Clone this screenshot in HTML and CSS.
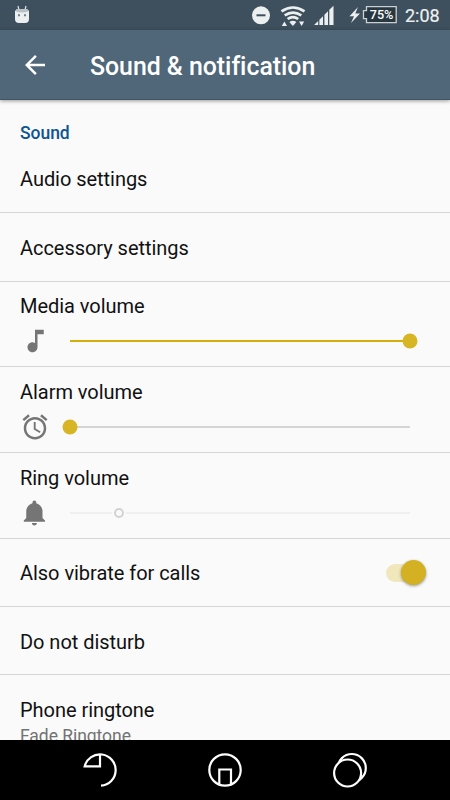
FILE: index.html
```html
<!DOCTYPE html>
<html lang="en">
<head>
    <meta charset="UTF-8">
    <meta name="viewport" content="width=device-width, initial-scale=1.0">
    <title>Sound &amp; notification</title>
    <link rel="stylesheet" href="styles.css">
</head>
<body>
    <div class="status-bar">
        <svg class="android" width="16" height="18" viewBox="0 0 16 18">
            <path d="M4 1l1 4M12 1l-1 4" stroke="#dfe3e5" stroke-width="1.2"/>
            <path d="M3 4h10l2 2v8q0 4-4 4H5q-4 0-4-4V6z" fill="#eceff0"/>
            <path d="M3 4h10l1.5 2.5q-6.5 2-13 0z" fill="#b9c1c7"/>
            <path d="M4 9.2h2v2H4zM10 9.2h2v2h-2z" fill="#70808c"/>
        </svg>
        <svg class="status-icons" width="148" height="30" viewBox="250 0 148 30">
            <circle cx="261" cy="15.3" r="9" fill="#eceff0"/>
            <path d="M256.5 15.3h9" stroke="#3e505d" stroke-width="2"/>
            <g fill="none" stroke="#eceff0" stroke-width="2.7">
                <path d="M281.5 11.4q11.5-7.8 23 0"/>
                <path d="M284.7 15.3q8.3-5.5 16.6 0"/>
                <path d="M287.6 19q5.3-3.6 10.6 0"/>
            </g>
            <path d="M289.4 22q3.5-2.4 7 0l-3.5 4z" fill="#eceff0"/>
            <path d="M281.8 26l2.6-4.4 2.6 4.4zM299 21.6h5.2l-2.6 4.4z" fill="#eceff0"/>
            <path d="M314.5 25v-.6l3.7-3.4v4zM319.4 25v-5.2l3.6-3.6V25zM324.4 25V14.8l3.6-3.6V25zM329.3 25V9.8l4.2-4V25z" fill="#eceff0"/>
            <path d="M358 7l-8.5 9.3h4.500l-3 6.700 9-9.400h-4.700z" fill="#eceff0"/>
            <path d="M366.5 6.7h29.7v16h-29.7v-4h-3v-8h3z" fill="#293740" stroke="#cbd0d4" stroke-width="1.3"/>
            <text class="battery-text" x="369.8" y="19.4" textLength="23.5" lengthAdjust="spacingAndGlyphs">75%</text>
        </svg>
        <span class="clock">2:08</span>
    </div>

    <header class="app-bar">
        <svg width="30" height="30" viewBox="0 0 24 24" fill="#fff">
            <path d="M20 11H7.83l5.59-5.59L12 4l-8 8 8 8 1.41-1.41L7.83 13H20v-2z"/>
        </svg>
        <h1>Sound &amp; notification</h1>
    </header>

    <main class="settings">
        <h2>Sound</h2>
        <div class="row first">Audio settings</div>
        <div class="row accessory">Accessory settings</div>

        <div class="volume media">
            <div class="label">Media volume</div>
            <div class="control">
                <svg width="30" height="30" viewBox="0 0 24 24" fill="#757575">
                    <path d="M12 3v10.550c-.59-.34-1.270-.55-2-.55-2.210 0-4 1.790-4 4s1.790 4 4 4 4-1.790 4-4V6.500h5V3h-7z"/>
                </svg>
                <div class="slider full"><span class="thumb"></span></div>
            </div>
        </div>

        <div class="volume">
            <div class="label">Alarm volume</div>
            <div class="control">
                <svg width="30" height="30" viewBox="0 0 24 24" fill="#757575">
                    <path d="M22 5.72l-4.6-3.86-1.29 1.53 4.6 3.86L22 5.72zM7.88 3.39L6.6 1.86 2 5.71l1.29 1.53 4.59-3.85zM12.5 8H11v6l4.75 2.85.75-1.23-4-2.37V8zM12 4c-4.97 0-9 4.03-9 9s4.02 9 9 9c4.97 0 9-4.03 9-9s-4.03-9-9-9zm0 16c-3.87 0-7-3.13-7-7s3.13-7 7-7 7 3.13 7 7-3.13 7-7 7z"/>
                </svg>
                <div class="slider"><span class="thumb"></span></div>
            </div>
        </div>

        <div class="volume">
            <div class="label">Ring volume</div>
            <div class="control">
                <svg width="30" height="30" viewBox="0 0 24 24" fill="#757575">
                    <path d="M11.5 22c1.1 0 2-.9 2-2h-4c0 1.1.9 2 2 2zm6.5-6v-5.5c0-3.07-2.13-5.64-5-6.32V3.5c0-.83-.67-1.5-1.5-1.5S10 2.67 10 3.5v.68c-2.87.68-5 3.25-5 6.32V16l-2 2v1h17v-1l-2-2z"/>
                </svg>
                <div class="slider disabled"><span class="thumb"></span></div>
            </div>
        </div>

        <div class="row vibrate">
            <span>Also vibrate for calls</span>
            <span class="switch"><span class="knob"></span></span>
        </div>
        <div class="row">Do not disturb</div>
        <div class="ringtone">
            <div>Phone ringtone</div>
            <div class="summary">Fade Ringtone</div>
        </div>
    </main>

    <nav class="nav-bar">
        <svg width="36" height="36" viewBox="0 0 36 36">
            <path d="M18 2.5v11.8H2.7A15.7 15.7 0 1 1 19 33.7"/>
        </svg>
        <svg width="36" height="36" viewBox="0 0 36 36">
            <circle cx="18" cy="18" r="15.7"/>
            <path d="M12.3 32V17.5H24V32"/>
        </svg>
        <svg width="36" height="36" viewBox="0 0 36 36">
            <circle cx="19.8" cy="16" r="14"/>
            <circle class="front" cx="15.6" cy="21" r="13.5"/>
        </svg>
    </nav>
</body>
</html>
```
FILE: styles.css
```css
* {
    box-sizing: border-box;
}

body {
    display: flex;
    flex-direction: column;
    height: 800px;
    margin: 0;
    overflow: hidden;
    background-color: #fafafa;
    color: #111;
    font-family: Roboto, sans-serif;
    font-size: 20px;
    line-height: 24px;
    letter-spacing: -0.04px;
}

svg {
    flex: none;
    display: block;
}

.status-bar {
    display: flex;
    align-items: center;
    flex: none;
    height: 30px;
    padding: 0 9px 0 14px;
    background-color: #3e505d;
    color: #eceff0;
}

.android {
    margin-top: -3px;
}

.status-icons {
    margin-left: 220px;
}

.battery-text {
    fill: #fff;
    font-size: 12px;
    font-weight: 500;
}

.clock {
    margin: 2px 0 0 7px;
    font-size: 18px;
    -webkit-text-stroke: 0.2px #eceff0;
}

.app-bar {
    display: flex;
    align-items: center;
    flex: none;
    position: relative;
    height: 70px;
    padding: 0 20px;
    background-color: #506779;
    border-bottom: 1px solid #3f5666;
    box-shadow: 0 1px 4px rgba(0, 0, 0, 0.4);
    color: #fff;
}

.app-bar h1 {
    margin: 4px 0 0 40px;
    font-size: 24.9px;
    font-weight: 500;
    line-height: 30px;
}

.settings {
    flex: 1;
    min-height: 0;
    overflow: hidden;
}

.settings h2 {
    margin: 0;
    padding: 21px 20px 0;
    height: 45px;
    color: #0e5491;
    font-size: 17.5px;
    font-weight: 500;
}

.row {
    display: flex;
    align-items: center;
    justify-content: space-between;
    height: 68px;
    padding: 2px 20px 0;
    border-bottom: 1px solid #d5d5d5;
}

.first,
.vibrate {
    padding-top: 0;
}

.accessory {
    height: 69px;
}

.volume {
    height: 86px;
    padding: 13px 20px 0;
    border-bottom: 1px solid #d5d5d5;
}

.media {
    height: 85px;
    padding-top: 12px;
}

.control {
    display: flex;
    align-items: center;
    gap: 20px;
    height: 30px;
    margin-top: 8px;
}

.slider {
    position: relative;
    width: 340px;
    height: 2px;
    background-color: #d5d5d5;
}

.thumb {
    position: absolute;
    top: 50%;
    left: 0;
    width: 15px;
    height: 15px;
    border-radius: 50%;
    background-color: #d8b525;
    transform: translate(-50%, -50%);
}

.full {
    background-color: #d3af08;
}

.full .thumb {
    left: 100%;
}

.disabled {
    background-color: #efefef;
}

.disabled .thumb {
    left: 48.5px;
    width: 10px;
    height: 10px;
    border: 2.5px solid #d2d2d2;
    background-color: #fafafa;
    box-shadow: 0 0 0 2px #fafafa;
}

.switch {
    position: relative;
    width: 36px;
    height: 18px;
    margin: 1px 8px 0 0;
    border-radius: 9px;
    background-color: #f0e7bd;
}

.knob {
    position: absolute;
    top: -4px;
    right: -4px;
    width: 25px;
    height: 25px;
    border-radius: 50%;
    background-color: #d3b122;
    box-shadow: 0 1px 3px rgba(0, 0, 0, 0.4);
}

.ringtone {
    padding: 23px 20px 0;
}

.summary {
    margin-top: 2px;
    color: #737373;
    font-size: 17.5px;
}

.nav-bar {
    display: flex;
    align-items: center;
    justify-content: center;
    gap: 89px;
    flex: none;
    height: 60px;
    background-color: #000;
}

.nav-bar svg {
    fill: none;
    stroke: #fff;
    stroke-width: 2.2;
}

.nav-bar .front {
    fill: #000;
}
```
